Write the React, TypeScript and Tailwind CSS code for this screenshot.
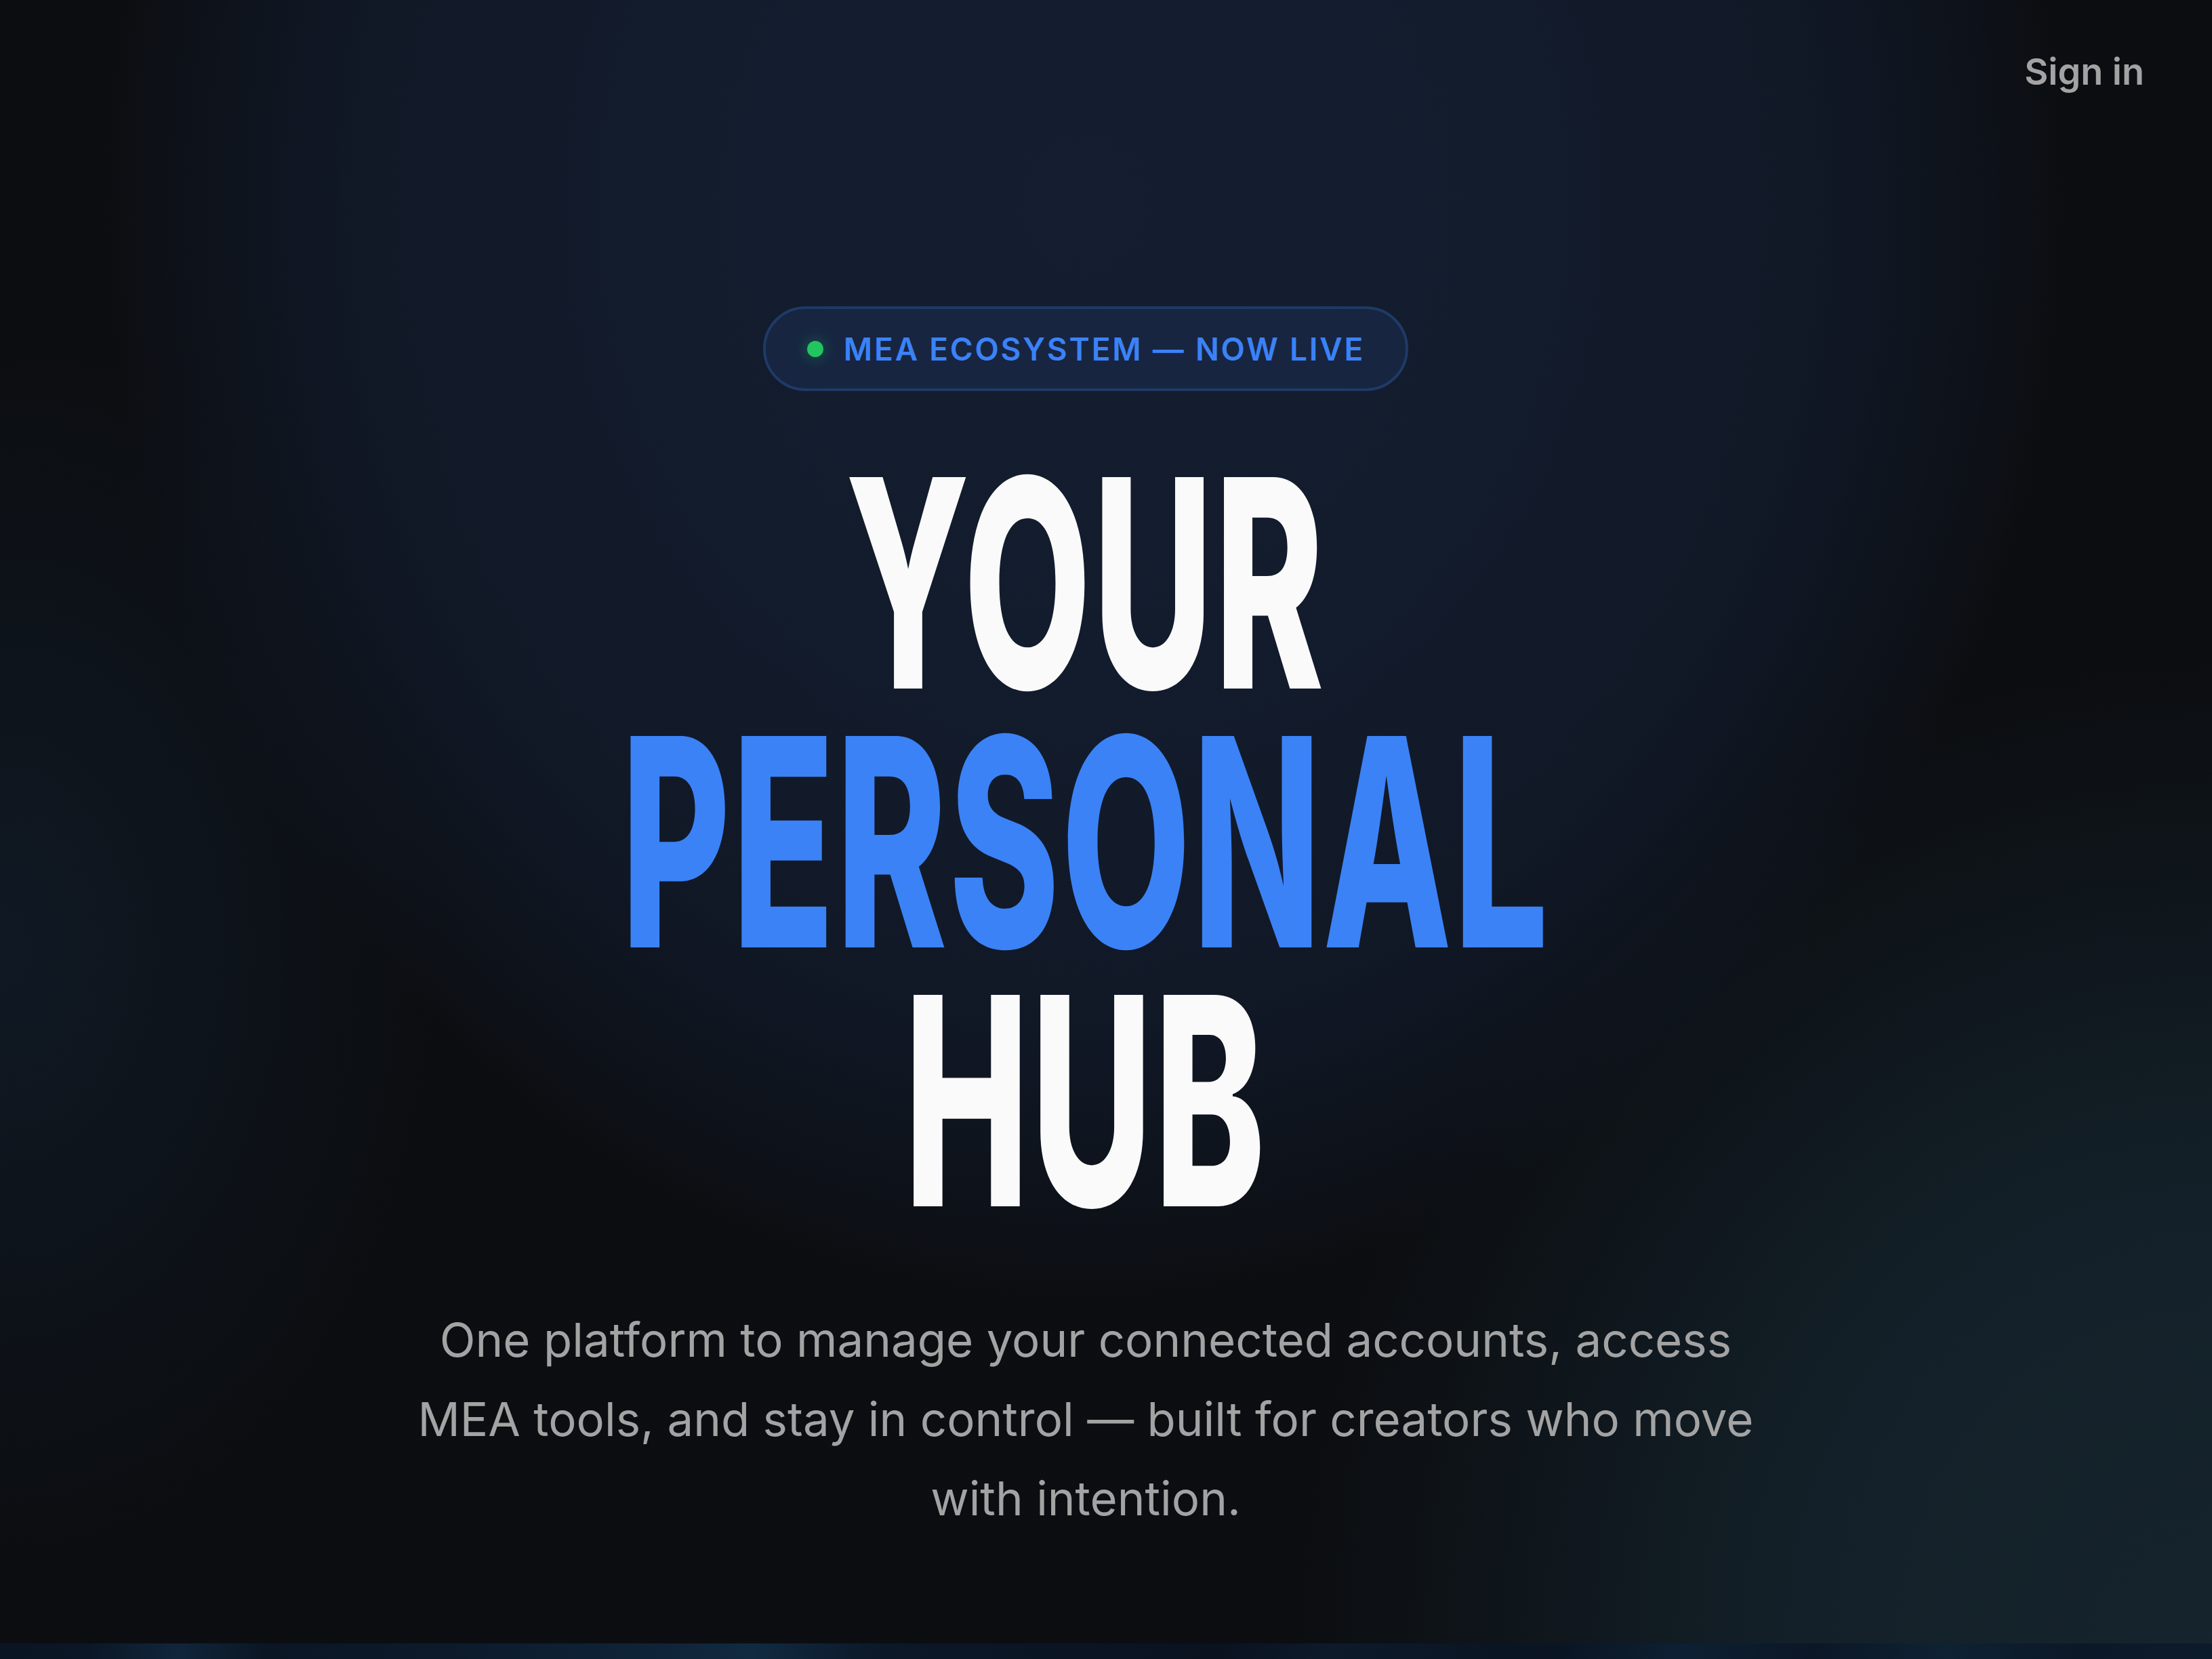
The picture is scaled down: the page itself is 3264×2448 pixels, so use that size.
export default function App() {
  return (
    <div className="relative h-[2448px] w-full overflow-hidden bg-[#0a0a0a] font-['Inter','Noto_Sans',sans-serif]">
      <section className="flex h-[2425px] flex-col bg-[image:radial-gradient(ellipse_1450px_1620px_at_1600px_300px,#141e30_0%,#131c2d_40%,rgba(16,24,37,0.25)_100%),radial-gradient(ellipse_1450px_1620px_at_1600px_300px,#101723_0%,#0f1521_72%,rgba(10,10,10,0)_100%),radial-gradient(ellipse_650px_900px_at_0px_1400px,rgba(17,30,44,0.75)_0%,rgba(10,10,10,0)_100%),radial-gradient(ellipse_1350px_1450px_at_3264px_2425px,#17282f_0%,#14232a_45%,rgba(10,10,10,0)_100%)] pr-[60px]">
        <header className="flex justify-end pr-[40px] pt-[79px]">
          <a className="text-[54px] font-semibold leading-none text-[#a3a3a3]">Sign in</a>
        </header>

        <main className="mt-[319px] flex flex-col items-center">
          <div className="flex h-[125px] items-center gap-[30px] rounded-full border-[4px] border-[#1f3a66] bg-[#172541] pl-[61px] pr-[60px]">
            <span className="h-[24px] w-[24px] rounded-full bg-[#22c55e] shadow-[0_0_22px_rgba(34,197,94,0.45)]" />
            <span className="text-[46px] font-semibold leading-none tracking-[0.06em] text-[#3b82f6]">
              MEA ECOSYSTEM — NOW LIVE
            </span>
          </div>

          <h1 className="mt-[92px] text-center text-[429px] font-extrabold leading-[382px] tracking-[0.01em]">
            <span className="block scale-x-[0.568] text-[#fafafa]">YOUR</span>
            <span className="block scale-x-[0.577] text-[#3b82f6]">PERSONAL</span>
            <span className="block scale-x-[0.575] text-[#fafafa]">HUB</span>
          </h1>

          <p className="mt-[104px] max-w-[2048px] text-center text-[69px] leading-[117px] text-[#a3a3a3]">
            One platform to manage your connected accounts, access MEA tools, and stay in control — built for creators who move with intention.
          </p>
        </main>
      </section>
      <div className="h-[23px] bg-[image:linear-gradient(90deg,#0a1523_0%,#0b1726_4%,#10263a_8%,#0a1624_12%,#0c1a2b_20%,#0f2438_30%,#112a40_34%,#0b1828_40%,#0a1220_55%,#0c1a2a_60%,#0a1422_70%,#0d2033_76%,#0b1727_82%,#0e2234_88%,#0b1828_94%,#0c1b2c_100%)]" />
    </div>
  );
}
